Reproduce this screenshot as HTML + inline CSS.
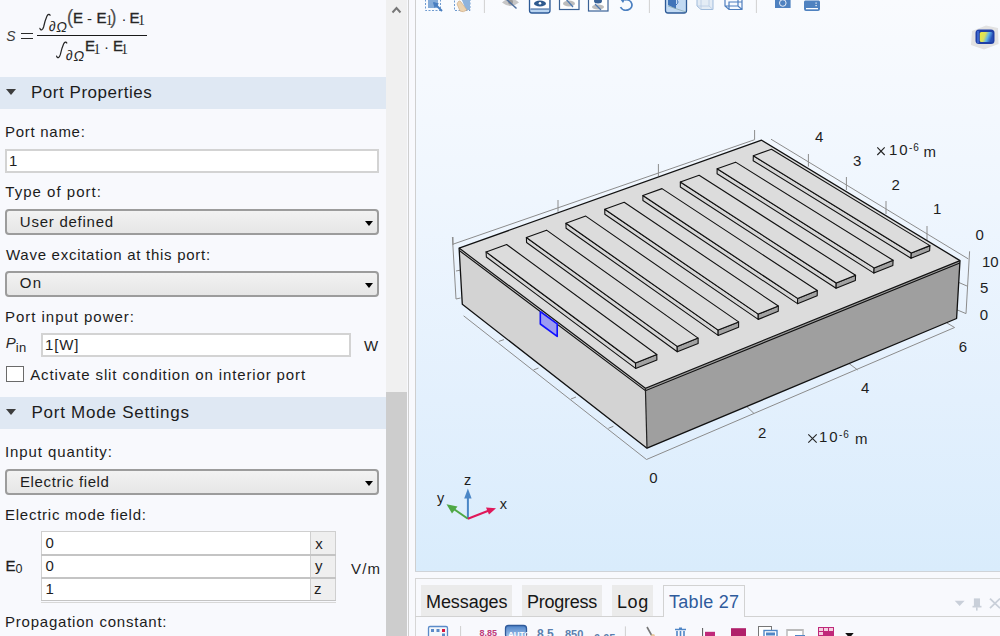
<!DOCTYPE html>
<html><head><meta charset="utf-8">
<style>
*{margin:0;padding:0;box-sizing:border-box}
html,body{width:1000px;height:636px;overflow:hidden;background:#f8f9fd;position:relative;font-family:"Liberation Sans",sans-serif}
.a{position:absolute}
.t{position:absolute;font-family:"Liberation Sans",sans-serif;font-size:15px;line-height:15px;color:#1c1c1c;white-space:nowrap}
.hdr{position:absolute;left:0;width:386px;height:32px;background:#dfe8f3}
.hdr .tri{position:absolute;left:6px;top:12px;width:0;height:0;border-left:5.5px solid transparent;border-right:5.5px solid transparent;border-top:6.5px solid #3c3c3c}
.inp{position:absolute;background:#fff;border:2px solid #d3d3d3}
.dd{position:absolute;left:5px;width:374px;height:26px;border:2px solid #9c9c9c;border-radius:4px;background:linear-gradient(#f2f2f2,#e6e6e6)}
.dd .arr{position:absolute;right:4px;top:10px;width:0;height:0;border-left:4.5px solid transparent;border-right:4.5px solid transparent;border-top:5px solid #000}
</style></head><body>
<div class="a" style="left:0;top:0;width:386px;height:636px;background:#f8f9fd"></div>
<div class="t" style="left:6.2px;top:28.8px;font-size:14px;line-height:14px;color:#3c3c3c;font-style:italic">S</div>
<div class="a" style="left:21px;top:32.5px;width:12px;height:1.2px;background:#2a2a2a"></div><div class="a" style="left:21px;top:37.5px;width:12px;height:1.2px;background:#2a2a2a"></div>
<div class="a" style="left:37px;top:35px;width:110px;height:1.3px;background:#1a1a1a"></div>
<svg class="a" style="left:0;top:0" width="150" height="70"><g fill="none" stroke="#262626" stroke-width="1.25" stroke-linecap="round"><path d="M39.9 28.4 C40.7 30.9 42.7 30.3 43.6 27 C44.6 22.5 45.6 19 47 16 C48 14.1 49.5 13.9 50.1 15.3"/><path d="M56.6 56.1 C57.4 58.6 59.4 58 60.3 54.7 C61.3 50.2 62.3 46.7 63.7 43.7 C64.7 41.8 66.2 41.6 66.8 43"/></g></svg>
<div class="t" style="left:48.8px;top:19px;font-size:14px;line-height:14px;color:#262626;font-style:italic">&#x2202;</div>
<div class="t" style="left:56.3px;top:20.2px;font-size:14px;line-height:14px;color:#262626;font-style:italic">&#x3A9;</div>
<div class="t" style="left:66.8px;top:7px;font-size:20px;line-height:20px;color:#262626;color:#555">(</div>
<div class="t" style="left:73px;top:10px;font-size:15px;line-height:15px;color:#262626;-webkit-text-stroke:0.35px #262626">E</div>
<div class="t" style="left:86.9px;top:10.5px;font-size:15px;line-height:15px;color:#262626;">-</div>
<div class="t" style="left:96.6px;top:10px;font-size:15px;line-height:15px;color:#262626;-webkit-text-stroke:0.35px #262626">E</div>
<div class="t" style="left:105.8px;top:13.9px;font-size:14px;line-height:14px;color:#262626;font-family:'Liberation Serif'">1</div>
<div class="t" style="left:109.9px;top:7px;font-size:20px;line-height:20px;color:#262626;color:#555">)</div>
<div class="t" style="left:121.5px;top:11px;font-size:15px;line-height:15px;color:#262626;">&#xB7;</div>
<div class="t" style="left:129.4px;top:10px;font-size:15px;line-height:15px;color:#262626;-webkit-text-stroke:0.35px #262626">E</div>
<div class="t" style="left:138px;top:13.9px;font-size:14px;line-height:14px;color:#262626;font-family:'Liberation Serif'">1</div>
<div class="t" style="left:65.8px;top:47.5px;font-size:14px;line-height:14px;color:#262626;font-style:italic">&#x2202;</div>
<div class="t" style="left:73.4px;top:48.9px;font-size:14px;line-height:14px;color:#262626;font-style:italic">&#x3A9;</div>
<div class="t" style="left:85px;top:38.4px;font-size:15px;line-height:15px;color:#262626;-webkit-text-stroke:0.35px #262626">E</div>
<div class="t" style="left:93.6px;top:42.6px;font-size:14px;line-height:14px;color:#262626;font-family:'Liberation Serif'">1</div>
<div class="t" style="left:103.9px;top:38.5px;font-size:15px;line-height:15px;color:#262626;">&#xB7;</div>
<div class="t" style="left:113px;top:38.4px;font-size:15px;line-height:15px;color:#262626;-webkit-text-stroke:0.35px #262626">E</div>
<div class="t" style="left:121px;top:42.6px;font-size:14px;line-height:14px;color:#262626;font-family:'Liberation Serif'">1</div>
<div class="hdr" style="top:77px"><div class="tri"></div></div>
<div class="t" style="left:31.0px;top:84.0px;font-size:17px;line-height:17px;letter-spacing:0.53px;">Port Properties</div>
<div class="t" style="left:5.0px;top:123.5px;font-size:15px;line-height:15px;letter-spacing:0.72px;">Port name:</div>
<div class="inp" style="left:5px;top:149px;width:374px;height:24px"></div>
<div class="t" style="left:8.9px;top:153px;font-size:15px;line-height:15px;color:#1e1e1e;">1</div>
<div class="t" style="left:5.3px;top:184.0px;font-size:15px;line-height:15px;letter-spacing:1.02px;">Type of port:</div>
<div class="dd" style="top:209px"><div class="arr"></div></div>
<div class="t" style="left:19.8px;top:214.0px;font-size:15px;line-height:15px;letter-spacing:0.75px;">User defined</div>
<div class="t" style="left:6.0px;top:246.5px;font-size:15px;line-height:15px;letter-spacing:0.73px;">Wave excitation at this port:</div>
<div class="dd" style="top:271px"><div class="arr"></div></div>
<div class="t" style="left:19.7px;top:275.0px;font-size:15px;line-height:15px;letter-spacing:1.3px;">On</div>
<div class="t" style="left:5.0px;top:308.6px;font-size:15px;line-height:15px;letter-spacing:0.97px;">Port input power:</div>
<div class="t" style="left:5.8px;top:334.7px;font-size:15px;line-height:15px;color:#2a2a2a;font-style:italic">P</div>
<div class="t" style="left:15.7px;top:341px;font-size:13px;line-height:13px;letter-spacing:0.4px;color:#1e1e1e;">in</div>
<div class="inp" style="left:41px;top:333px;width:310px;height:24px"></div>
<div class="t" style="left:45px;top:336.6px;font-size:15px;line-height:15px;letter-spacing:0.83px;color:#1e1e1e;">1[W]</div>
<div class="t" style="left:364px;top:337.5px;font-size:15px;line-height:15px;color:#1e1e1e;">W</div>
<div class="a" style="left:6px;top:366px;width:18px;height:16px;background:#fff;border:1px solid #6a6a6a"></div>
<div class="t" style="left:30.2px;top:366.9px;font-size:15px;line-height:15px;letter-spacing:0.87px;">Activate slit condition on interior port</div>
<div class="hdr" style="top:397px"><div class="tri"></div></div>
<div class="t" style="left:31.4px;top:404.1px;font-size:17px;line-height:17px;letter-spacing:0.76px;">Port Mode Settings</div>
<div class="t" style="left:5.0px;top:444.4px;font-size:15px;line-height:15px;letter-spacing:0.9px;">Input quantity:</div>
<div class="dd" style="top:469px"><div class="arr"></div></div>
<div class="t" style="left:20.0px;top:473.7px;font-size:15px;line-height:15px;letter-spacing:0.62px;">Electric field</div>
<div class="t" style="left:5.0px;top:506.7px;font-size:15px;line-height:15px;letter-spacing:0.75px;">Electric mode field:</div>
<div class="a" style="left:41px;top:531px;width:295px;height:70px;background:#fff;border:1px solid #cfcfcf"></div>
<div class="a" style="left:310px;top:532px;width:25px;height:22px;background:#efefef;border-left:1px solid #cfcfcf"></div>
<div class="t" style="left:45.4px;top:535.2px;font-size:15px;line-height:15px;color:#1e1e1e;">0</div>
<div class="a" style="left:310px;top:555px;width:25px;height:22px;background:#efefef;border-left:1px solid #cfcfcf"></div>
<div class="a" style="left:41px;top:554px;width:295px;height:1.5px;background:#c4c4c4"></div>
<div class="t" style="left:45.4px;top:558.2px;font-size:15px;line-height:15px;color:#1e1e1e;">0</div>
<div class="a" style="left:310px;top:578px;width:25px;height:22px;background:#efefef;border-left:1px solid #cfcfcf"></div>
<div class="a" style="left:41px;top:577px;width:295px;height:1.5px;background:#c4c4c4"></div>
<div class="t" style="left:45.4px;top:581.2px;font-size:15px;line-height:15px;color:#1e1e1e;">1</div>
<div class="t" style="left:315.2px;top:535.7px;font-size:15px;line-height:15px;color:#1e1e1e;">x</div>
<div class="t" style="left:315px;top:557.7px;font-size:15px;line-height:15px;color:#1e1e1e;">y</div>
<div class="t" style="left:314px;top:581px;font-size:15px;line-height:15px;color:#1e1e1e;">z</div>
<div class="a" style="left:41px;top:599.5px;width:295px;height:1.5px;background:#c4c4c4"></div>
<div class="a" style="left:41px;top:602px;width:295px;height:1px;background:#d8d8d8"></div>
<div class="t" style="left:5.6px;top:557.8px;font-size:15px;line-height:15px;color:#1e1e1e;-webkit-text-stroke:0.3px #1c1c1c">E</div>
<div class="t" style="left:15.4px;top:562.7px;font-size:12.5px;line-height:12.5px;color:#1e1e1e;">0</div>
<div class="t" style="left:351px;top:560.7px;font-size:15px;line-height:15px;letter-spacing:1.15px;color:#1e1e1e;">V/m</div>
<div class="t" style="left:5.0px;top:614.0px;font-size:15px;line-height:15px;letter-spacing:0.78px;">Propagation constant:</div>

<div class="a" style="left:386px;top:0;width:21px;height:636px;background:#f0f0f0"></div>
<div class="a" style="left:386px;top:392px;width:21px;height:244px;background:#cdcdcd"></div>
<svg class="a" style="left:386px;top:0" width="21" height="20"><path d="M6.5 12.5 L10.5 8 L14.5 12.5" fill="none" stroke="#777" stroke-width="2"/></svg>
<div class="a" style="left:407px;top:0;width:9px;height:636px;background:#f8f9fd"></div>
<div class="a" style="left:408px;top:0;width:1px;height:636px;background:#cfcfcf"></div>
<div class="a" style="left:415px;top:0;width:1px;height:572px;background:#cfcfcf"></div>
<div class="a" style="left:416px;top:0;width:584px;height:571px;background:linear-gradient(#f9fbfe 0%,#eff6fe 35%,#e3f0fd 70%,#d9ecfc 100%)"></div>
<div class="a" style="left:415px;top:571px;width:585px;height:1px;background:#cfd3d8"></div>
<svg class="a" style="left:416px;top:0" width="584" height="60"><defs><linearGradient id="btng" x1="0" y1="0" x2="0" y2="1"><stop offset="0" stop-color="#cfe2f6"/><stop offset="1" stop-color="#b6d2f0"/></linearGradient></defs><rect x="9.5" y="-3" width="15" height="13.5" fill="none" stroke="#6f9bd0" stroke-width="1" stroke-dasharray="2,1.5"/><rect x="12" y="-2" width="10" height="10" fill="#86acd8"/><path d="M18 3 L26 11" stroke="#4a7fc0" stroke-width="2"/><polygon points="17,2 23,3.5 18.5,8" fill="#4a7fc0"/><rect x="38.5" y="-3" width="15.5" height="13.5" fill="none" stroke="#6f9bd0" stroke-width="1" stroke-dasharray="2,1.5"/><polygon points="45,-2 54,-2 54,10 50,10" fill="#8fb3dc"/><path d="M41 4 Q43 -1 45 2 L51 10 Q47 13 44 11 Z" fill="#ecd3b0" stroke="#c9a57a" stroke-width="0.6"/><line x1="68.4" y1="0" x2="68.4" y2="13" stroke="#d0d0d0" stroke-width="1"/><path d="M86 2.5 Q94.5 -5 103 2.5 Q94.5 9.5 86 2.5 Z" fill="#c6c6c6"/><circle cx="94.5" cy="2" r="2.5" fill="#9a9a9a"/><line x1="89" y1="-2" x2="100.5" y2="8.5" stroke="#4f6f9c" stroke-width="1.5"/><rect x="113.5" y="-3" width="20.5" height="16" rx="2.5" fill="url(#btng)" stroke="#2d5a96" stroke-width="1.3"/><rect x="114.5" y="-3" width="18.5" height="12" fill="#fff"/><line x1="114.5" y1="9" x2="133" y2="9" stroke="#2d5a96" stroke-width="1"/><ellipse cx="124" cy="3.5" rx="6" ry="3" fill="#2f5a8e"/><circle cx="124" cy="3.3" r="1.3" fill="#fff"/><rect x="143.5" y="-3" width="19.5" height="12.5" fill="#fff" stroke="#3a6296" stroke-width="1.2"/><ellipse cx="153" cy="3.5" rx="6" ry="3" fill="#bdbdbd"/><line x1="149" y1="-2" x2="157" y2="7" stroke="#4f79b0" stroke-width="1.3"/><rect x="172.5" y="-3" width="19.5" height="14" fill="#fff" stroke="#3a6296" stroke-width="1.2"/><ellipse cx="182" cy="1" rx="4" ry="2.5" fill="#3a6296"/><ellipse cx="182" cy="7" rx="6" ry="2.5" fill="#bdbdbd"/><line x1="179" y1="4" x2="185" y2="10" stroke="#4f79b0" stroke-width="1.2"/><path d="M208.5 0 A6 5.2 0 1 1 204.5 7.2" fill="none" stroke="#4a7fc0" stroke-width="1.7"/><polygon points="204,-1 209.5,-1.5 207,3" fill="#4a7fc0"/><line x1="233.4" y1="0" x2="233.4" y2="13" stroke="#d0d0d0" stroke-width="1"/><rect x="249.5" y="-3" width="21" height="16" rx="2.5" fill="#c2daf3" stroke="#2d5a96" stroke-width="1.3"/><polygon points="252,-2 260,-2 260,9 252,5" fill="#3f74b8"/><path d="M260 -1 Q264 2 260 5" fill="none" stroke="#3f74b8" stroke-width="1"/><line x1="252" y1="6" x2="270" y2="12" stroke="#8aa" stroke-width="0.7"/><path d="M281 -2 L281 6 L285 9.5 L297 9.5 L297 -2" fill="#e4ecf5" stroke="#9fbbdc" stroke-width="1"/><path d="M285 9.5 V-2 M281 6 H293 L297 9.5 M293 6 V-2" stroke="#b7cbe3" stroke-width="0.8" fill="none"/><path d="M309 -2 V6 L313 9.5 H326 V-2 M309 6 H322 L326 9.5 M313 9.5 V2 H326 M322 6 V-2" fill="none" stroke="#4f7fbe" stroke-width="1.2"/><line x1="340.4" y1="0" x2="340.4" y2="13" stroke="#d0d0d0" stroke-width="1"/><rect x="359" y="-2" width="15.6" height="10" fill="#4f82c0"/><circle cx="366.8" cy="3" r="3.3" fill="none" stroke="#e8eef8" stroke-width="1"/><path d="M388 2 Q388 0 390 0.6 H402 Q404 0 404 2 V9 Q404 11 402 11 H390 Q388 11 388 9 Z" fill="#4f82c0"/><rect x="390" y="8" width="12" height="1.3" fill="#fff"/><rect x="399.5" y="2.5" width="1.2" height="1.2" fill="#fff"/><rect x="399.5" y="5" width="1.2" height="1.2" fill="#fff"/><defs><filter id="blr" x="-30%" y="-30%" width="160%" height="160%"><feGaussianBlur stdDeviation="0.7"/></filter><linearGradient id="lg" x1="0" y1="0" x2="1" y2="0.3"><stop offset="0" stop-color="#f2ea3a"/><stop offset="0.45" stop-color="#d8e060"/><stop offset="0.7" stop-color="#5fb4ea"/><stop offset="1" stop-color="#2850b8"/></linearGradient></defs><polygon points="556,31 570,25.5 582,28 582.5,44 568,49.5 555,45" fill="#e2e2e2" filter="url(#blr)"/><rect x="559.5" y="29.5" width="19" height="14.5" rx="3.5" fill="#1f3fa6"/><rect x="563.8" y="32" width="13" height="10" rx="1.5" fill="url(#lg)"/><rect x="561" y="31" width="2" height="12" fill="#3a64cc"/></svg>
<svg class="a" style="left:0;top:0" width="1000" height="636" viewBox="0 0 1000 636">
<g stroke="#8c8c8c" stroke-width="1" fill="none"><polyline points="452.4,237 456,299 460.5,298"/><polyline points="453,244.2 754.6,139.7 754.6,130"/><line x1="453" y1="237" x2="453" y2="245"/><line x1="558" y1="200" x2="558" y2="211.8"/><line x1="658.4" y1="164" x2="658.4" y2="176"/><line x1="456" y1="271" x2="461" y2="270"/><polyline points="771,139.2 968.3,258.9"/><line x1="808.4" y1="154" x2="808.4" y2="166.6"/><line x1="846.4" y1="177" x2="846.4" y2="190"/><line x1="886" y1="201" x2="886" y2="214"/><line x1="927" y1="226" x2="927" y2="240"/><polyline points="969.6,251.3 966,313.6 957,309.8"/><line x1="958.9" y1="282.5" x2="967.4" y2="286.2"/><polyline points="463.6,315.8 646.5,459.5 954.6,327.5 947,323"/><line x1="747" y1="406.7" x2="754" y2="413.5"/><line x1="849" y1="363.5" x2="857.7" y2="370"/><line x1="498.8" y1="341.4" x2="504" y2="339.6"/><line x1="533.5" y1="370" x2="538.5" y2="368"/><line x1="571" y1="399" x2="576" y2="397"/><line x1="608.4" y1="428.3" x2="613.4" y2="426.3"/></g>
<polygon points="459.10,248.10 645.40,388.20 647.00,448.20 462.30,304.30" fill="#d3d3d3"/>
<polygon points="645.40,388.20 960.00,260.60 956.60,318.50 647.00,448.20" fill="#9f9f9f"/>
<polygon points="459.10,248.10 761.60,140.20 960.00,260.60 645.40,388.20" fill="#dcdcdc"/>
<polyline points="459.23,250.46 645.47,390.72 959.86,263.03" fill="none" stroke="#111" stroke-width="1.1"/>
<polygon points="459.10,248.10 761.60,140.20 960.00,260.60 956.60,318.50 647.00,448.20 462.30,304.30" fill="none" stroke="#111" stroke-width="1.3" stroke-linejoin="round"/>
<polyline points="459.10,248.10 645.40,388.20 960.00,260.60" fill="none" stroke="#111" stroke-width="1.2"/>
<line x1="645.4" y1="388.2" x2="647" y2="448.2" stroke="#222" stroke-width="1.2"/>
<polygon points="540.3,311.7 557.2,323.9 557.2,336.4 540.3,324" fill="#9c9cf2" stroke="#1010ff" stroke-width="1.6" stroke-linejoin="round"/>
<polygon points="486.10,251.92 635.49,363.05 635.63,368.41 486.36,257.01" fill="#d6d6d6" stroke="#111" stroke-width="1.1" stroke-linejoin="round"/>
<polygon points="635.49,363.05 656.78,354.56 656.90,359.90 635.63,368.41" fill="#a2a2a2" stroke="#111" stroke-width="1.1" stroke-linejoin="round"/>
<polygon points="486.10,251.92 506.65,244.53 656.78,354.56 635.49,363.05" fill="#dcdcdc" stroke="#111" stroke-width="1.1" stroke-linejoin="round"/>
<polygon points="526.38,237.43 677.21,346.41 677.30,351.74 526.58,242.49" fill="#d6d6d6" stroke="#111" stroke-width="1.1" stroke-linejoin="round"/>
<polygon points="677.21,346.41 698.09,338.08 698.15,343.40 677.30,351.74" fill="#a2a2a2" stroke="#111" stroke-width="1.1" stroke-linejoin="round"/>
<polygon points="526.38,237.43 546.55,230.17 698.09,338.08 677.21,346.41" fill="#dcdcdc" stroke="#111" stroke-width="1.1" stroke-linejoin="round"/>
<polygon points="565.92,223.20 718.12,330.09 718.15,335.40 566.06,228.24" fill="#d6d6d6" stroke="#111" stroke-width="1.1" stroke-linejoin="round"/>
<polygon points="718.12,330.09 738.60,321.92 738.60,327.22 718.15,335.40" fill="#a2a2a2" stroke="#111" stroke-width="1.1" stroke-linejoin="round"/>
<polygon points="565.92,223.20 585.73,216.08 738.60,321.92 718.12,330.09" fill="#dcdcdc" stroke="#111" stroke-width="1.1" stroke-linejoin="round"/>
<polygon points="604.75,209.23 758.24,314.09 758.22,319.38 604.84,214.25" fill="#d6d6d6" stroke="#111" stroke-width="1.1" stroke-linejoin="round"/>
<polygon points="758.24,314.09 778.33,306.08 778.28,311.35 758.22,319.38" fill="#a2a2a2" stroke="#111" stroke-width="1.1" stroke-linejoin="round"/>
<polygon points="604.75,209.23 624.20,202.23 778.33,306.08 758.24,314.09" fill="#dcdcdc" stroke="#111" stroke-width="1.1" stroke-linejoin="round"/>
<polygon points="642.88,195.51 797.60,298.39 797.52,303.66 642.92,200.50" fill="#d6d6d6" stroke="#111" stroke-width="1.1" stroke-linejoin="round"/>
<polygon points="797.60,298.39 817.31,290.53 817.20,295.79 797.52,303.66" fill="#a2a2a2" stroke="#111" stroke-width="1.1" stroke-linejoin="round"/>
<polygon points="642.88,195.51 662.00,188.63 817.31,290.53 797.60,298.39" fill="#dcdcdc" stroke="#111" stroke-width="1.1" stroke-linejoin="round"/>
<polygon points="680.34,182.03 836.21,282.99 836.07,288.24 680.32,187.00" fill="#d6d6d6" stroke="#111" stroke-width="1.1" stroke-linejoin="round"/>
<polygon points="836.21,282.99 855.55,275.28 855.38,280.51 836.07,288.24" fill="#a2a2a2" stroke="#111" stroke-width="1.1" stroke-linejoin="round"/>
<polygon points="680.34,182.03 699.12,175.28 855.55,275.28 836.21,282.99" fill="#dcdcdc" stroke="#111" stroke-width="1.1" stroke-linejoin="round"/>
<polygon points="717.15,168.79 874.10,267.89 873.91,273.10 717.07,173.74" fill="#d6d6d6" stroke="#111" stroke-width="1.1" stroke-linejoin="round"/>
<polygon points="874.10,267.89 893.08,260.32 892.86,265.52 873.91,273.10" fill="#a2a2a2" stroke="#111" stroke-width="1.1" stroke-linejoin="round"/>
<polygon points="717.15,168.79 735.60,162.15 893.08,260.32 874.10,267.89" fill="#dcdcdc" stroke="#111" stroke-width="1.1" stroke-linejoin="round"/>
<polygon points="753.32,155.78 911.29,253.06 911.04,258.25 753.18,160.70" fill="#d6d6d6" stroke="#111" stroke-width="1.1" stroke-linejoin="round"/>
<polygon points="911.29,253.06 929.91,245.63 929.64,250.81 911.04,258.25" fill="#a2a2a2" stroke="#111" stroke-width="1.1" stroke-linejoin="round"/>
<polygon points="753.32,155.78 771.45,149.26 929.91,245.63 911.29,253.06" fill="#dcdcdc" stroke="#111" stroke-width="1.1" stroke-linejoin="round"/>
<g stroke-linecap="butt"><line x1="467.9" y1="518.8" x2="467.9" y2="497" stroke="#4a86c6" stroke-width="2"/><polygon points="467.9,488.6 464.2,498.5 471.6,498.5" fill="#4a86c6"/><line x1="467.9" y1="518.8" x2="453" y2="508.5" stroke="#4fa845" stroke-width="2"/><polygon points="446.5,504.2 457.5,506.5 452,513.5" fill="#4fa845"/><line x1="467.9" y1="518.8" x2="489" y2="510.5" stroke="#e0185a" stroke-width="2"/><polygon points="496,508.3 486,507.5 489,514.5" fill="#e0185a"/></g>
</svg>
<div class="t" style="left:815px;top:129.4px;font-size:15px;line-height:15px;color:#1e1e1e;">4</div>
<div class="t" style="left:853px;top:152.6px;font-size:15px;line-height:15px;color:#1e1e1e;">3</div>
<div class="t" style="left:891.4px;top:176.6px;font-size:15px;line-height:15px;color:#1e1e1e;">2</div>
<div class="t" style="left:933px;top:201px;font-size:15px;line-height:15px;color:#1e1e1e;">1</div>
<div class="t" style="left:975.4px;top:227.4px;font-size:15px;line-height:15px;color:#1e1e1e;">0</div>
<div class="t" style="left:980px;top:280px;font-size:15px;line-height:15px;color:#1e1e1e;">5</div>
<div class="t" style="left:979.8px;top:307px;font-size:15px;line-height:15px;color:#1e1e1e;">0</div>
<div class="t" style="left:982px;top:253.8px;font-size:15px;line-height:15px;color:#1e1e1e;">10</div>
<div class="t" style="left:649.3px;top:470.3px;font-size:15px;line-height:15px;color:#1e1e1e;">0</div>
<div class="t" style="left:758px;top:424.5px;font-size:15px;line-height:15px;color:#1e1e1e;">2</div>
<div class="t" style="left:861px;top:380px;font-size:15px;line-height:15px;color:#1e1e1e;">4</div>
<div class="t" style="left:958.8px;top:339px;font-size:15px;line-height:15px;color:#1e1e1e;">6</div>
<div class="t" style="left:889px;top:142px;font-size:15px;line-height:15px;letter-spacing:2.0px;color:#1e1e1e;">10</div>
<div class="t" style="left:909px;top:143px;font-size:10px;line-height:10px;letter-spacing:1.0px;color:#1e1e1e;">-6</div>
<div class="t" style="left:923.4px;top:144px;font-size:15px;line-height:15px;color:#1e1e1e;">m</div>
<div class="t" style="left:819px;top:429px;font-size:15px;line-height:15px;letter-spacing:2.0px;color:#1e1e1e;">10</div>
<div class="t" style="left:839px;top:430px;font-size:10px;line-height:10px;letter-spacing:1.0px;color:#1e1e1e;">-6</div>
<div class="t" style="left:855px;top:431px;font-size:15px;line-height:15px;color:#1e1e1e;">m</div>
<svg class="a" style="left:0;top:0" width="1000" height="636"><path d="M877.3 147.3 L884.7 155 M884.7 147.3 L877.3 155 M808.3 434.3 L816.7 442.7 M816.7 434.3 L808.3 442.7" stroke="#262626" stroke-width="1.15"/></svg>
<div class="t" style="left:463.9px;top:473.1px;font-size:14.5px;line-height:14.5px;color:#1e1e1e;">z</div>
<div class="t" style="left:437px;top:490.8px;font-size:14.5px;line-height:14.5px;color:#1e1e1e;">y</div>
<div class="t" style="left:499.8px;top:496.9px;font-size:14.5px;line-height:14.5px;color:#1e1e1e;">x</div>

<div class="a" style="left:415px;top:578px;width:585px;height:58px;background:#f8f9fd;border-left:1px solid #d6d6d6;border-top:1px solid #d6d6d6"></div>
<div class="a" style="left:421px;top:585px;width:91px;height:31px;background:#ebebeb"></div>
<div class="a" style="left:522px;top:585px;width:80px;height:31px;background:#ebebeb"></div>
<div class="a" style="left:612px;top:585px;width:41px;height:31px;background:#ebebeb"></div>
<div class="a" style="left:415px;top:616px;width:585px;height:1px;background:#d2d2d2"></div>
<div class="a" style="left:663px;top:585px;width:82px;height:32px;background:#f8f9fd;border:1px solid #d2d2d2;border-bottom:none"></div>
<div class="t" style="left:426px;top:593px;font-size:18px;line-height:18px;letter-spacing:-0.07px;color:#161616;">Messages</div>
<div class="t" style="left:526.9px;top:592.9px;font-size:18px;line-height:18px;letter-spacing:-0.23px;color:#161616;">Progress</div>
<div class="t" style="left:616.9px;top:592.6px;font-size:18px;line-height:18px;letter-spacing:0.65px;color:#161616;">Log</div>
<div class="t" style="left:669px;top:592.6px;font-size:18px;line-height:18px;letter-spacing:0.29px;color:#2f5b9c;">Table 27</div>
<svg class="a" style="left:940px;top:590px" width="60" height="30"><polygon points="14.7,10.8 24.6,10.8 19.6,15.9" fill="#c9cfd9"/><rect x="33.9" y="8.4" width="6.1" height="7.8" fill="#c9cfd9"/><rect x="32.5" y="15.8" width="9" height="1.7" fill="#c9cfd9"/><rect x="36" y="17.3" width="1.6" height="3.3" fill="#c9cfd9"/><path d="M50 8.6 L60 18.2 M50 18.2 L60 8.6" stroke="#c9cfd9" stroke-width="1.8"/></svg>
<svg class="a" style="left:416px;top:616px" width="584" height="20"><rect x="12.5" y="10.5" width="19" height="12" rx="1.5" fill="#f4f7fb" stroke="#5b8bc9" stroke-width="1.3"/><rect x="15" y="13" width="3" height="3" fill="#5b8bc9"/><rect x="20.5" y="13" width="3" height="3" fill="#5b8bc9"/><rect x="26" y="13" width="3" height="3" fill="#d9163c"/><rect x="26" y="17.5" width="3" height="3" fill="#5b8bc9"/><line x1="44.6" y1="10" x2="44.6" y2="20" stroke="#cfcfcf" stroke-width="1"/><text x="63.5" y="20" font-family="Liberation Sans" font-size="9" font-weight="bold" fill="#c03a7a">8.85</text><rect x="89.5" y="9.5" width="21" height="12" rx="3" fill="url(#autog)" stroke="#2f5a9a" stroke-width="1.3"/><defs><linearGradient id="autog" x1="0" y1="0" x2="0" y2="1"><stop offset="0" stop-color="#4d82c8"/><stop offset="1" stop-color="#a9c8ec"/></linearGradient></defs><text x="92" y="21" font-family="Liberation Sans" font-size="8" font-weight="bold" fill="#fff">AUTO</text><text x="121" y="21.5" font-family="Liberation Sans" font-size="12" font-weight="bold" fill="#5a7fae">8.5</text><text x="149" y="21.5" font-family="Liberation Sans" font-size="11" font-weight="bold" fill="#5a7fae">850</text><text x="178" y="26" font-family="Liberation Sans" font-size="11" font-weight="bold" fill="#5a7fae">0.05</text><line x1="209.4" y1="10.4" x2="209.4" y2="20" stroke="#cfcfcf" stroke-width="1"/><line x1="231" y1="11" x2="236" y2="20" stroke="#777" stroke-width="1.6"/><circle cx="237" cy="20" r="2" fill="#e8c9a0"/><path d="M259 13.5 H270 M261 15 V20 M264.5 15 V20 M268 15 V20" stroke="#4f86c6" stroke-width="1.6" fill="none"/><rect x="263" y="11.5" width="3" height="2" fill="#4f86c6"/><line x1="286.6" y1="12" x2="286.6" y2="20" stroke="#555" stroke-width="1"/><rect x="289" y="15.8" width="10" height="5" fill="#c0297a"/><rect x="315" y="12.2" width="15" height="10" fill="#b0206a"/><rect x="342.5" y="10.5" width="13" height="10" fill="#fff" stroke="#777" stroke-width="1"/><rect x="348" y="14.5" width="13" height="8" fill="#fff" stroke="#4f86c6" stroke-width="1.4"/><rect x="350" y="16.5" width="9" height="3" fill="#4f86c6"/><rect x="371" y="13.5" width="16" height="10" fill="#fff" stroke="#999" stroke-width="1"/><rect x="371" y="13" width="16" height="2" fill="#bbb"/><rect x="379" y="19" width="10" height="3" fill="#4f86c6"/><rect x="402.5" y="11.5" width="15" height="12" fill="#f4d0e0" stroke="#c0297a" stroke-width="1"/><path d="M402.5 15.5 H417.5 M402.5 19.5 H417.5 M407.5 11.5 V23 M412.5 11.5 V23" stroke="#c0297a" stroke-width="1"/><rect x="407.5" y="15.5" width="10" height="4" fill="#c0297a"/><polygon points="429.2,17 437.7,17 433.5,22" fill="#111"/></svg>

</body></html>
